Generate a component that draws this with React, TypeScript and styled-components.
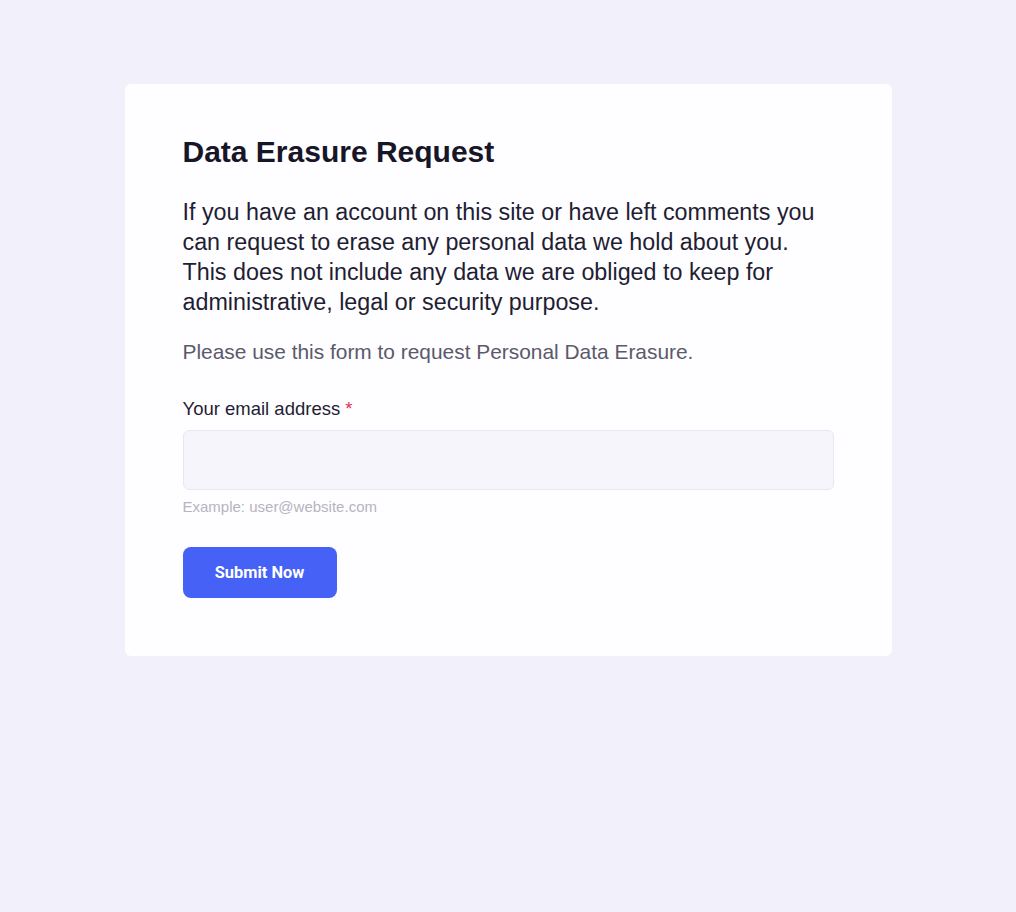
import styled, { createGlobalStyle } from "styled-components";

const GlobalStyle = createGlobalStyle`
  html, body {
    margin: 0;
    padding: 0;
    background: #f2f0fa;
    font-family: "Liberation Sans", Arial, sans-serif;
  }
`;

function App() {
  return (
    <Page>
      <GlobalStyle />
      <Card>
        <Title>Data Erasure Request</Title>
        <Lead>
          If you have an account on this site or have left comments you can
          request to erase any personal data we hold about you. This does not
          include any data we are obliged to keep for administrative, legal or
          security purpose.
        </Lead>
        <Note>Please use this form to request Personal Data Erasure.</Note>
        <Field>
          <Label>
            Your email address <span>*</span>
          </Label>
          <Input type="email" />
          <Hint>Example: user@website.com</Hint>
        </Field>
        <Button>Submit Now</Button>
      </Card>
    </Page>
  );
}

const Page = styled.div`
  min-height: 912px;
  display: flex;
  justify-content: center;
  align-items: flex-start;
  padding-top: 84px;
  box-sizing: border-box;
`;

const Card = styled.div`
  width: 767px;
  box-sizing: border-box;
  background: #fefdff;
  border-radius: 6px;
  padding: 50px 58px 58px;
  display: flex;
  flex-direction: column;
  align-items: flex-start;
`;

const Title = styled.h1`
  margin: 0;
  font-size: 30px;
  line-height: 36px;
  font-weight: 700;
  color: #171628;
`;

const Lead = styled.p`
  margin: 27px 0 0;
  font-size: 23.3px;
  line-height: 30px;
  color: #1f1e33;
`;

const Note = styled.p`
  margin: 22px 0 0;
  font-size: 20.9px;
  line-height: 26px;
  color: #5b5a6a;
`;

const Field = styled.div`
  margin-top: 33px;
  width: 100%;
  display: flex;
  flex-direction: column;
`;

const Label = styled.label`
  font-size: 18.5px;
  line-height: 22px;
  color: #1f1e33;

  span {
    color: #e0334f;
  }
`;

const Input = styled.input`
  margin-top: 10px;
  height: 60px;
  width: 100%;
  box-sizing: border-box;
  background: #f6f5fb;
  border: 1px solid #e9e7f1;
  border-radius: 6px;
  outline: none;
  padding: 0 16px;
  font-size: 16px;
`;

const Hint = styled.span`
  margin-top: 8px;
  font-size: 15px;
  line-height: 18px;
  color: #b6b5c0;
`;

const Button = styled.button`
  margin-top: 31px;
  width: 154px;
  height: 51px;
  border: none;
  border-radius: 8px;
  background: #4661f5;
  color: #fff;
  font-family: Roboto, "Liberation Sans", sans-serif;
  font-weight: 700;
  font-size: 16.4px;
  cursor: pointer;
`;

export default App;
